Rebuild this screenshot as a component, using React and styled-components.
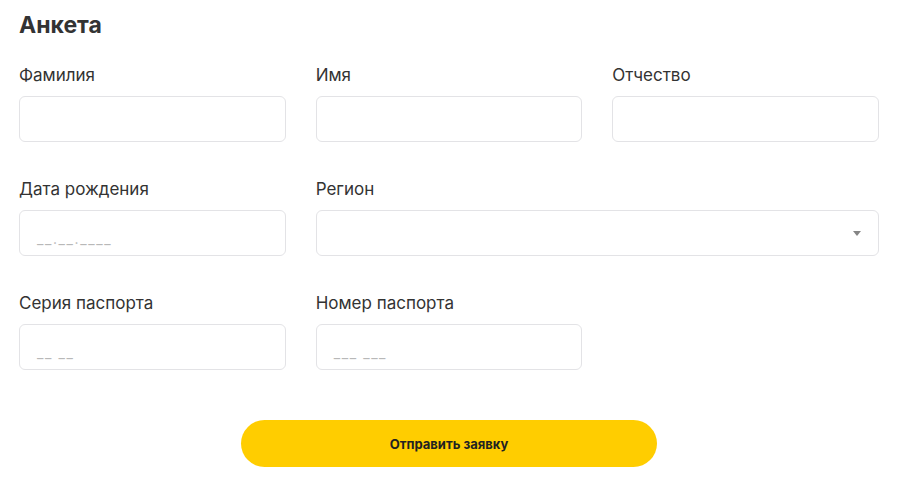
import React from "react";
import styled, { createGlobalStyle } from "styled-components";

const Global = createGlobalStyle`
  html, body { margin: 0; padding: 0; background: #fff; }
  body { font-family: Inter, Roboto, "Noto Sans", sans-serif; color: #333; }
  * { box-sizing: border-box; }
`;

const Page = styled.div`
  padding: 10px 21px 0 19px;
`;

const Title = styled.h1`
  margin: 0;
  font-size: 23px;
  line-height: 30px;
  font-weight: 700;
  color: #333;
`;

const Grid = styled.div`
  margin-top: 25px;
  display: grid;
  grid-template-columns: repeat(3, 1fr);
  column-gap: 30px;
  row-gap: 37px;
`;

const Field = styled.label`
  display: flex;
  flex-direction: column;
  gap: 11px;
  grid-column: ${(p) => (p.$span ? `span ${p.$span}` : "auto")};
`;

const LabelText = styled.span`
  font-size: 17px;
  line-height: 20px;
  color: #333;
`;

const Box = styled.div`
  position: relative;
  height: 46px;
  border: 1px solid #e3e3e6;
  border-radius: 6px;
  background: #fff;
  display: flex;
  align-items: flex-end;
  padding: 0 17px 8px;
`;

const Placeholder = styled.span`
  font-size: 14px;
  line-height: 16px;
  color: #b8b8b8;
  letter-spacing: 1.6px;
`;

const Arrow = styled.span`
  position: absolute;
  right: 17px;
  top: 50%;
  margin-top: -2px;
  width: 0;
  height: 0;
  border-left: 4.5px solid transparent;
  border-right: 4.5px solid transparent;
  border-top: 5px solid #858585;
`;

const Footer = styled.div`
  display: flex;
  justify-content: center;
  margin-top: 50px;
`;

const Submit = styled.button`
  width: 416px;
  height: 47px;
  border: none;
  border-radius: 24px;
  background: #ffcd00;
  color: #222;
  font-family: inherit;
  font-size: 13px;
  font-weight: 700;
  cursor: pointer;
`;

const fields = [
  { label: "Фамилия" },
  { label: "Имя" },
  { label: "Отчество" },
  { label: "Дата рождения", placeholder: "__.__.____" },
  { label: "Регион", span: 2, select: true },
  { label: "Серия паспорта", placeholder: "__ __" },
  { label: "Номер паспорта", placeholder: "___ ___" },
];

export default function App() {
  return (
    <Page>
      <Global />
      <Title>Анкета</Title>
      <Grid>
        {fields.map((f) => (
          <Field key={f.label} $span={f.span}>
            <LabelText>{f.label}</LabelText>
            <Box>
              {f.placeholder && <Placeholder>{f.placeholder}</Placeholder>}
              {f.select && <Arrow />}
            </Box>
          </Field>
        ))}
      </Grid>
      <Footer>
        <Submit>Отправить заявку</Submit>
      </Footer>
    </Page>
  );
}
